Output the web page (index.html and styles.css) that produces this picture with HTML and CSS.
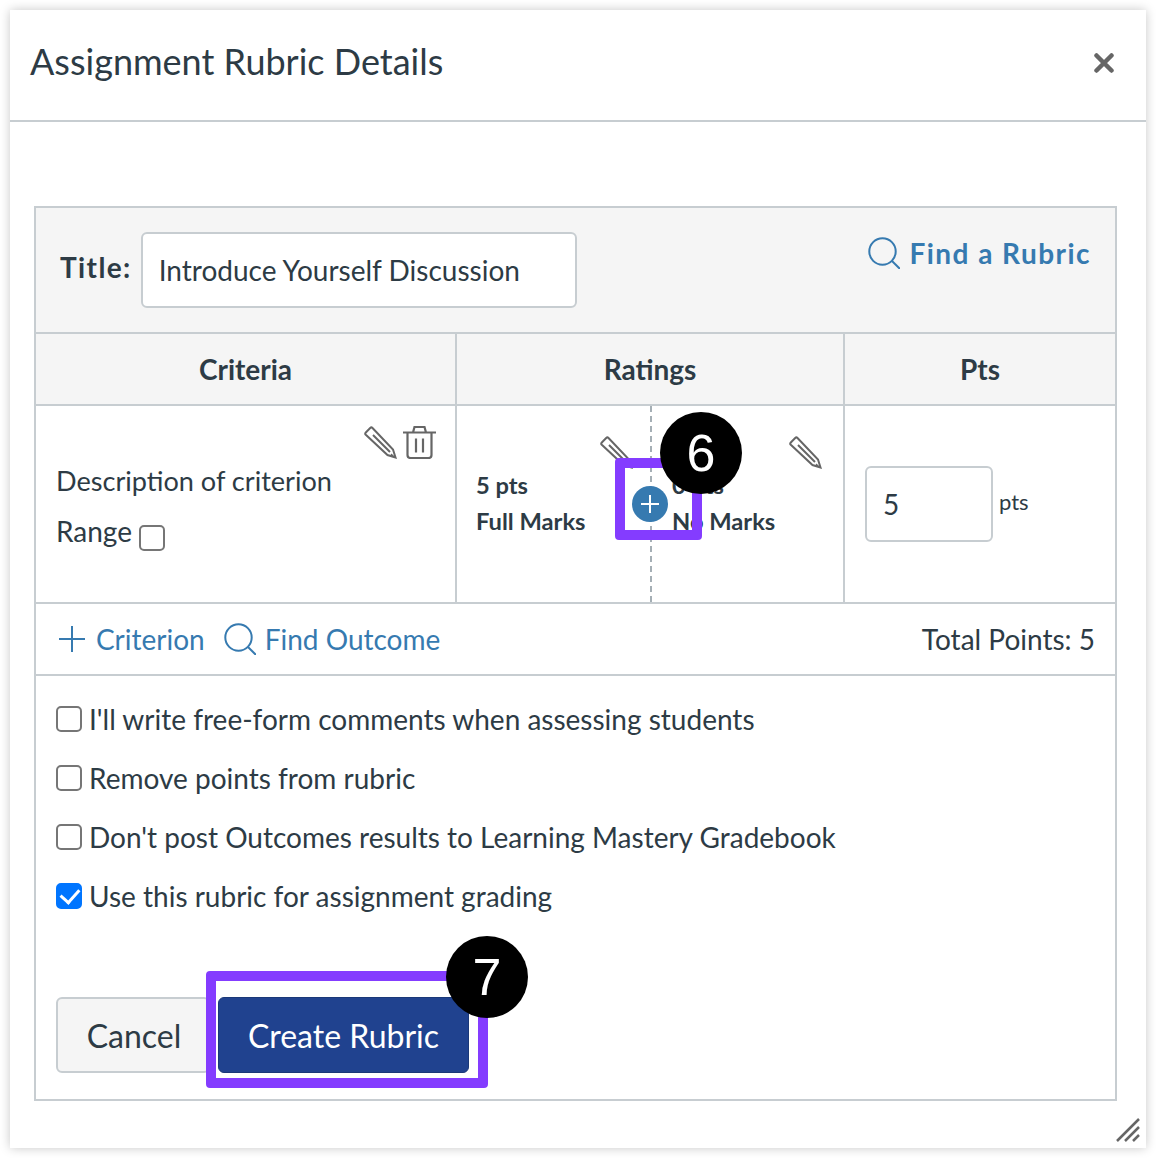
FILE: index.html
```html
<!DOCTYPE html>
<html lang="en">
<head>
<meta charset="utf-8">
<title>Assignment Rubric Details</title>
<link rel="stylesheet" href="styles.css">
</head>
<body>
<div class="dialog">
  <header class="dialog-header">
    <h1 class="dialog-title">Assignment Rubric Details</h1>
    <svg class="close-icon" viewBox="0 0 20 20"><path d="M2.5 2.5l15 15M17.5 2.5l-15 15"/></svg>
  </header>
  <div class="dialog-body">
    <div class="rubric">
      <section class="title-bar">
        <label class="title-label">Title:</label>
        <div class="text-field title-field">Introduce Yourself Discussion</div>
        <a class="find-rubric">
          <svg class="search-icon" viewBox="0 0 32 32"><circle cx="14.5" cy="14.5" r="13.2"/><path d="M24 24l8 8"/></svg>
          <span>Find a Rubric</span>
        </a>
      </section>
      <div class="grid-row head-row">
        <div class="head-cell">Criteria</div>
        <div class="head-cell">Ratings</div>
        <div class="head-cell last">Pts</div>
      </div>
      <div class="grid-row body-row">
        <div class="criterion-cell">
          <div class="criterion-actions">
            <svg class="pencil-icon" viewBox="0 0 33 33"><path d="M1.8 6.500L6.200 2c.7-.7 1.600-.7 2.300 0L29 23.500l2.500 8-8-2.500L1.800 8.800c-.6-.6-.6-1.700 0-2.300zM9 9l17 17"/><path class="tip" d="M27.500 27.500l4 4-5.500-1.700z"/></svg>
            <svg class="trash-icon" viewBox="0 0 33 33"><path d="M0 6.500h33M10 6.500L11.500 1h10L23 6.500M4.500 6.500V29c0 2 1 3 3 3h18c2 0 3-1 3-3V6.500M13 12.500v14M20 12.500v14"/></svg>
          </div>
          <p class="criterion-text">Description of criterion</p>
          <label class="range-line">Range <input type="checkbox" class="box"></label>
        </div>
        <div class="ratings-cell">
          <div class="rating">
            <svg class="pencil-icon" viewBox="0 0 33 33"><path d="M1.8 6.500L6.200 2c.7-.7 1.600-.7 2.300 0L29 23.500l2.500 8-8-2.500L1.800 8.800c-.6-.6-.6-1.700 0-2.300zM9 9l17 17"/><path class="tip" d="M27.500 27.500l4 4-5.500-1.700z"/></svg>
            <div class="rating-pts">5 pts</div>
            <div class="rating-name">Full Marks</div>
          </div>
          <div class="rating second">
            <svg class="pencil-icon" viewBox="0 0 33 33"><path d="M1.8 6.500L6.200 2c.7-.7 1.600-.7 2.300 0L29 23.500l2.500 8-8-2.500L1.800 8.800c-.6-.6-.6-1.700 0-2.300zM9 9l17 17"/><path class="tip" d="M27.500 27.500l4 4-5.500-1.700z"/></svg>
            <div class="rating-pts">0 pts</div>
            <div class="rating-name">No Marks</div>
          </div>
        </div>
        <div class="pts-cell">
          <div class="text-field pts-field">5</div>
          <span class="pts-unit">pts</span>
        </div>
      </div>
      <div class="action-row">
        <a class="rubric-link link-criterion">
          <svg class="plus-icon" viewBox="0 0 26 26"><path d="M13 0v26M0 13h26"/></svg>
          <span>Criterion</span>
        </a>
        <a class="rubric-link">
          <svg class="search-icon" viewBox="0 0 32 32"><circle cx="14.5" cy="14.5" r="13.2"/><path d="M24 24l8 8"/></svg>
          <span>Find Outcome</span>
        </a>
        <div class="total">Total Points: 5</div>
      </div>
      <div class="options">
        <label class="option"><input type="checkbox" class="box"><span>I'll write free-form comments when assessing students</span></label>
        <label class="option"><input type="checkbox" class="box"><span>Remove points from rubric</span></label>
        <label class="option"><input type="checkbox" class="box"><span>Don't post Outcomes results to Learning Mastery Gradebook</span></label>
        <label class="option"><input type="checkbox" class="box" checked><span>Use this rubric for assignment grading</span></label>
        <div class="buttons">
          <button class="btn btn-cancel">Cancel</button>
          <button class="btn btn-create">Create Rubric</button>
        </div>
      </div>
    </div>
  </div>
  <svg class="resize-handle" viewBox="0 0 24 24"><path d="M1 23L23 1M9 23L23 9M17 23l6-6"/></svg>
  <div class="add-rating"><svg class="add-plus" viewBox="0 0 20 20"><path d="M10 1v18M1 10h18"/></svg></div>
  <div class="callout-box box-six"></div>
  <div class="badge badge-six">6</div>
  <div class="callout-box box-seven"></div>
  <div class="badge badge-seven">7</div>
</div>
</body>
</html>
```
FILE: styles.css
```css
* { box-sizing: border-box; }
html, body { margin: 0; background: #fff; }
body {
  padding: 10px;
  font-family: Lato, "Liberation Sans", sans-serif;
  color: #2d3b45;
  font-size: 28px;
}
.dialog {
  position: relative;
  width: 1136px;
  height: 1138px;
  background: #fff;
  box-shadow: 0 0 10px rgba(0,0,0,.22);
}
.dialog-header {
  height: 112px;
  border-bottom: 2px solid #c7cdd1;
  display: flex;
  align-items: center;
  justify-content: space-between;
  padding: 0 32px 4px 20px;
}
.dialog-title { margin: 0 0 4px; font-size: 36px; font-weight: 400; line-height: 44px; }
.close-icon { width: 20px; height: 20px; fill: none; stroke: #666; stroke-width: 4.5; stroke-linecap: round; }
.dialog-body { padding: 84px 29px 0 24px; }
.rubric { border: 2px solid #c7cdd1; height: 895px; display: flex; flex-direction: column; }
.title-bar {
  height: 126px;
  flex: none;
  background: #f5f5f5;
  border-bottom: 2px solid #c7cdd1;
  display: flex;
  align-items: flex-start;
  padding: 24px 24px 0;
}
.title-label { font-weight: 700; margin: 18px 9px 0 0; line-height: 34px; letter-spacing: 1.4px; }
.text-field {
  background: #fff;
  border: 2px solid #c7cdd1;
  border-radius: 6px;
  display: flex;
  align-items: center;
}
.title-field { width: 436px; height: 76px; padding: 0 16px; }
.find-rubric {
  margin-left: auto;
  display: flex;
  align-items: center;
  gap: 10px;
  color: #367ab0;
  font-weight: 700;
  letter-spacing: 1.45px;
  line-height: 42px;
}
.search-icon { width: 32px; height: 32px; fill: none; stroke: #367ab0; stroke-width: 2; }
.grid-row { display: grid; grid-template-columns: 421px 388px 1fr; flex: none; border-bottom: 2px solid #c7cdd1; }
.head-row { height: 72px; background: #f5f5f5; }
.head-cell {
  border-right: 2px solid #c7cdd1;
  display: flex;
  align-items: center;
  justify-content: center;
  font-weight: 700;
}
.head-cell.last { border-right: 0; }
.body-row { height: 198px; }
.criterion-cell { border-right: 2px solid #c7cdd1; padding: 20px 19px 0 20px; }
.criterion-actions { display: flex; justify-content: flex-end; gap: 6px; height: 33px; }
.pencil-icon { width: 33px; height: 33px; fill: none; stroke: #666; stroke-width: 2; }
.pencil-icon .tip { fill: #666; stroke: none; }
.trash-icon { width: 33px; height: 33px; fill: none; stroke: #666; stroke-width: 2.2; }
.criterion-text { margin: 0; font-size: 27.1px; line-height: 44px; }
.range-line { display: flex; align-items: center; gap: 7px; line-height: 44px; margin-top: 6px; }
.box {
  appearance: none;
  position: relative;
  width: 26px;
  height: 26px;
  margin: 0;
  flex: none;
  background: #fff;
  border: 2px solid #767676;
  border-radius: 5px;
}
.box:checked { background: #0075ff; border-color: #0075ff; }
.box:checked::after {
  content: "";
  position: absolute;
  left: 6px;
  top: 0;
  width: 9px;
  height: 15px;
  border: solid #fff;
  border-width: 0 3.5px 3.5px 0;
  transform: rotate(42deg);
}
.range-line .box { margin-top: 13px; }
.ratings-cell { display: grid; grid-template-columns: 193px 1fr; border-right: 2px solid #c7cdd1; }
.rating { position: relative; padding: 61px 0 0 19px; font-weight: 700; font-size: 23.7px; line-height: 36px; }
.rating .pencil-icon { position: absolute; top: 30px; right: 17px; }
.rating.second { border-left: 2px dashed #a5afb5; padding-left: 20px; }
.rating.second .pencil-icon { right: 21px; }
.pts-cell { display: flex; align-items: flex-start; padding: 60px 0 0 20px; gap: 6px; }
.pts-field { width: 128px; height: 76px; padding: 0 16px; }
.pts-unit { font-size: 22px; line-height: 26px; margin-top: 23px; }
.action-row {
  height: 72px;
  flex: none;
  border-bottom: 2px solid #c7cdd1;
  display: flex;
  align-items: center;
  gap: 19px;
  padding: 0 20px 0 23px;
}
.rubric-link { display: flex; align-items: center; gap: 9px; color: #367ab0; }
.link-criterion { gap: 11px; }
.plus-icon { width: 26px; height: 26px; fill: none; stroke: #367ab0; stroke-width: 2; }
.total { margin-left: auto; }
.options { flex: 1; padding: 13px 21px 0 20px; display: flex; flex-direction: column; }
.option { display: flex; align-items: center; gap: 7px; height: 59px; flex: none; line-height: 44px; }
.buttons { display: flex; margin-top: 72px; gap: 8px; }
.btn {
  font: inherit;
  font-size: 32px;
  height: 76px;
  border-radius: 6px;
  padding: 0;
}
.btn-cancel { width: 154px; background: #f5f5f5; border: 2px solid #c7cdd1; color: #2d3b45; padding-left: 2px; }
.btn-create { width: 251px; background: #20428f; border: 1px solid #1a3878; color: #fff; }
.resize-handle { position: absolute; right: 6px; bottom: 6px; width: 24px; height: 24px; fill: none; stroke: #666; stroke-width: 2.5; }
.add-rating {
  position: absolute;
  left: 622px;
  top: 476px;
  width: 36px;
  height: 36px;
  border-radius: 50%;
  background: #367ab0;
  display: flex;
  align-items: center;
  justify-content: center;
}
.add-plus { width: 20px; height: 20px; fill: none; stroke: #fff; stroke-width: 2; }
.callout-box { position: absolute; border: 10px solid #843cff; border-radius: 4px; }
.box-six { left: 605px; top: 448px; width: 87px; height: 82px; }
.box-seven { left: 196px; top: 961px; width: 282px; height: 117px; }
.badge {
  position: absolute;
  width: 82px;
  height: 82px;
  border-radius: 50%;
  background: #000;
  color: #fff;
  font-family: "Liberation Sans", Arial, sans-serif;
  font-size: 52px;
  display: flex;
  align-items: center;
  justify-content: center;
}
.badge-six { left: 650px; top: 402px; }
.badge-seven { left: 436px; top: 926px; }
```
